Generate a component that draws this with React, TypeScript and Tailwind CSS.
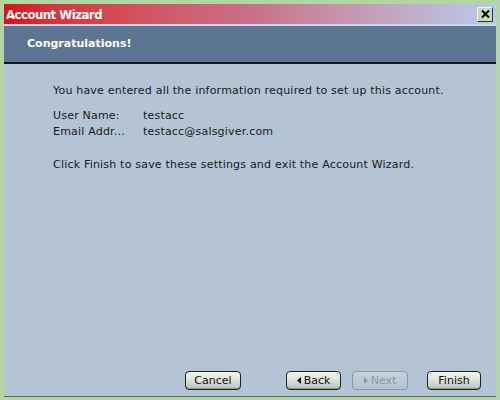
import React from "react";

const font = { fontFamily: "'DejaVu Sans', Verdana, sans-serif" };

const WizButton = ({
  label,
  disabled,
  arrow,
  className,
}: {
  label: string;
  disabled?: boolean;
  arrow?: "left" | "right";
  className?: string;
}) => {
  return (
    <button
      className={
        "h-[19px] flex items-center justify-center gap-[2px] rounded-[4px] border text-[11px] leading-none bg-gradient-to-b " +
        (disabled
          ? "border-[#8a9aa8] text-[#8a98a6] from-[#c8d2dc] to-[#b4c2d0] "
          : "border-[#1c2420] text-[#101010] from-[#f4f6f0] via-[#dde3d8] to-[#b6c0b4] shadow-[inset_0_-1px_0_#8a948a] ") +
        (className ?? "")
      }
      style={font}
    >
      {arrow === "left" && (
        <svg width="4" height="7" viewBox="0 0 4 7" className="mr-[1px]">
          <path d="M4 0 L0 3.5 L4 7 Z" fill="#101010" />
        </svg>
      )}
      {arrow === "right" && (
        <svg width="4" height="7" viewBox="0 0 4 7" className="mr-[1px]">
          <path d="M0 0 L4 3.5 L0 7 Z" fill="#8a98a6" />
        </svg>
      )}
      {label}
    </button>
  );
};

export default function App() {
  return (
    <div className="w-[500px] h-[400px] bg-[#b4d4a4] flex flex-col pt-[4px] pl-[4px] pr-[4px] pb-[3px]">
      {/* title bar */}
      <div className="h-[20px] flex items-center justify-between bg-gradient-to-r from-[#d8101c] via-[#c87088] to-[#b4ccec] pl-[2px] pr-[3px]">
        <span
          className="text-white font-bold text-[13px] leading-none tracking-[-0.5px]"
          style={{ fontFamily: "'DejaVu Sans Condensed', 'DejaVu Sans', sans-serif" }}
        >
          Account Wizard
        </span>
        <div className="w-[16px] h-[15px] bg-[#c4dcb4] border-r border-b border-[#303830] border-t border-l border-t-[#eef6e8] border-l-[#eef6e8] flex items-center justify-center">
          <svg width="9" height="8" viewBox="0 0 9 8">
            <path d="M1 0.5 L8 7.5 M8 0.5 L1 7.5" stroke="#000" strokeWidth="2" />
          </svg>
        </div>
      </div>
      <div className="h-[2px] bg-[#c8d8e8]" />

      {/* header band */}
      <div className="h-[38px] bg-[#5b7592] border-b-2 border-[#101820] flex items-center pl-[23px]">
        <span className="text-white font-bold text-[11px]" style={font}>
          Congratulations!
        </span>
      </div>

      {/* body */}
      <div className="flex-1 bg-[#b5c4d4] flex flex-col border-b border-[#5a6a5a]">
        <div className="flex-1 pl-[49px] pt-[19px] text-[11px] text-[#181818] leading-[16px] tracking-[0.2px]" style={font}>
          <p>You have entered all the information required to set up this account.</p>
          <div className="mt-[9px] grid grid-cols-[90px_1fr]">
            <span>User Name:</span>
            <span>testacc</span>
            <span>Email Addr...</span>
            <span>testacc@salsgiver.com</span>
          </div>
          <p className="mt-[17px]">Click Finish to save these settings and exit the Account Wizard.</p>
        </div>
        <div className="flex items-center justify-end pr-[15px] pb-[6px]">
          <WizButton label="Cancel" className="w-[56px] mr-[45px]" />
          <WizButton label="Back" arrow="left" className="w-[55px] mr-[11px]" />
          <WizButton label="Next" arrow="right" disabled className="w-[56px] mr-[19px]" />
          <WizButton label="Finish" className="w-[54px]" />
        </div>
      </div>
    </div>
  );
}
